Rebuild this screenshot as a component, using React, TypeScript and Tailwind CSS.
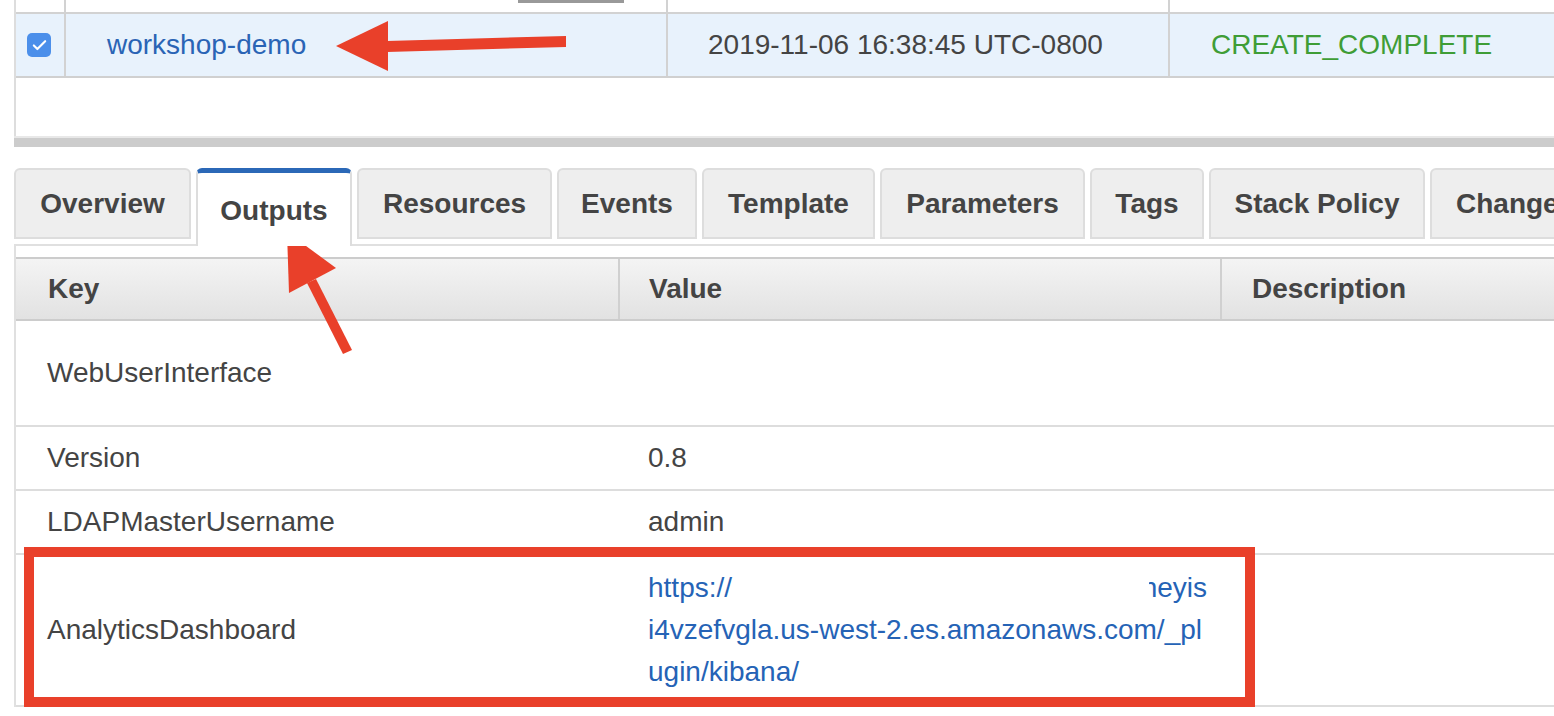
import { Check } from 'lucide-react'

const FONT = { fontFamily: '"Liberation Sans", Arial, Helvetica, sans-serif' }

// Tab widths measured off the console strip
const TABS = [
  { label: 'Overview', w: 'w-[177px]' },
  { label: 'Outputs', w: 'w-[156px]', active: true },
  { label: 'Resources', w: 'w-[195px]' },
  { label: 'Events', w: 'w-[140px]' },
  { label: 'Template', w: 'w-[173px]' },
  { label: 'Parameters', w: 'w-[205px]' },
  { label: 'Tags', w: 'w-[114px]' },
  { label: 'Stack Policy', w: 'w-[216px]' },
]

const OUTPUTS = [
  { key: 'WebUserInterface', value: '', h: 'h-[106px]' },
  { key: 'Version', value: '0.8', h: 'h-[64px]' },
  { key: 'LDAPMasterUsername', value: 'admin', h: 'h-[64px]' },
]

function StackRow() {
  return (
    <div className="ml-[14px] border-l-2 border-[#dddddd]">
      <div className="flex h-[14px] border-b-2 border-[#d2d2d2]">
        <div className="w-[50px] border-r-2 border-[#d2d2d2]" />
        <div className="w-[602px] border-r-2 border-[#d2d2d2]">
          <div className="ml-[452px] w-[106px] h-[3px] bg-[#999999]" />
        </div>
        <div className="w-[502px] border-r-2 border-[#d2d2d2]" />
        <div className="flex-1" />
      </div>
      <div className="flex h-[64px] bg-[#e8f2fc] border-b-2 border-[#d0d0d0] text-[28px]">
        <div className="w-[50px] border-r-2 border-[#d2d2d2] flex items-center justify-center pr-[2px]">
          <div className="w-[24px] h-[24px] rounded-[5px] bg-[#4b8fea] flex items-center justify-center">
            <Check className="w-[17px] h-[17px] text-white" strokeWidth={3} />
          </div>
        </div>
        <div className="w-[602px] border-r-2 border-[#d2d2d2] flex items-center pl-[41px] text-[#2a64b5]">
          workshop-demo
        </div>
        <div className="w-[502px] border-r-2 border-[#d2d2d2] flex items-center pl-[40px] text-[#444444]">
          2019-11-06 16:38:45 UTC-0800
        </div>
        <div className="flex-1 flex items-center pl-[41px] text-[#3f9d36]">CREATE_COMPLETE</div>
      </div>
      <div className="h-[58px]" />
    </div>
  )
}

function Tabs() {
  return (
    <div className="mt-[21px] ml-[14px] h-[76px] flex items-start gap-[5px] whitespace-nowrap">
      {TABS.map(t =>
        t.active ? (
          <div
            key={t.label}
            className={`${t.w} relative z-10 h-[78px] shrink-0 bg-white border-x-2 border-[#dddddd] border-t-[5px] border-t-[#2b68b7] rounded-t-[6px] flex items-center justify-center pt-[2px] text-[28px] font-bold text-[#444444]`}
          >
            {t.label}
          </div>
        ) : (
          <div
            key={t.label}
            className={`${t.w} h-[71px] shrink-0 bg-[#eeeeee] border-2 border-[#dddddd] rounded-t-[6px] flex items-center justify-center text-[28px] font-bold text-[#444444]`}
          >
            {t.label}
          </div>
        )
      )}
      <div className="w-[220px] h-[71px] shrink-0 bg-[#eeeeee] border-2 border-[#dddddd] rounded-t-[6px] flex items-center pl-[24px] text-[28px] font-bold text-[#444444]">
        Change Sets
      </div>
    </div>
  )
}

function OutputsTable() {
  return (
    <div className="ml-[14px] border-l-2 border-t-2 border-[#e0e0e0] pt-[11px] text-[28px] text-[#444444]">
      <div className="flex h-[64px] border-y-2 border-[#cccccc] bg-gradient-to-b from-[#f4f4f4] to-[#e2e2e2] font-bold">
        <div className="w-[604px] border-r-2 border-[#d0d0d0] flex items-center pl-[32px]">Key</div>
        <div className="w-[602px] border-r-2 border-[#d0d0d0] flex items-center pl-[29px]">Value</div>
        <div className="flex-1 flex items-center pl-[30px]">Description</div>
      </div>
      {OUTPUTS.map(r => (
        <div key={r.key} className={`flex ${r.h} border-b-2 border-[#dddddd]`}>
          <div className="w-[604px] flex items-center pl-[31px]">{r.key}</div>
          <div className="w-[602px] flex items-center pl-[28px]">{r.value}</div>
        </div>
      ))}
      <div className="flex h-[152px] border-b-2 border-[#dddddd]">
        <div className="w-[604px] flex items-center pl-[31px]">AnalyticsDashboard</div>
        <div className="w-[602px] flex items-center pl-[28px]">
          <div className="w-[562px] leading-[42px] text-[#2563b6]">
            <div className="flex justify-between">
              <span>https://</span>
              <span className="inline-block overflow-hidden">
                <span className="inline-block -ml-[7px] mr-[3px]">neyis</span>
              </span>
            </div>
            <div>i4vzefvgla.us-west-2.es.amazonaws.com/_pl</div>
            <div>ugin/kibana/</div>
          </div>
        </div>
      </div>
    </div>
  )
}

export default function App() {
  return (
    <div className="relative w-[1554px] h-[716px] overflow-hidden bg-white" style={FONT}>
      <StackRow />
      <div className="ml-[14px] h-[11px] bg-[#cccccc] border-t-2 border-[#e8e8e8]" />
      <Tabs />
      <OutputsTable />

      {/* annotations drawn over the screenshot */}
      <div className="absolute left-[24px] top-[547px] w-[1231px] h-[160px] border-[10px] border-[#e9402a] pointer-events-none" />
      <svg className="absolute inset-0 pointer-events-none" width="1554" height="716" viewBox="0 0 1554 716">
        <polygon points="566,36 566,47 387,52 387,41" fill="#e9402a" />
        <polygon points="336,46 388,21 388,71" fill="#e9402a" />
        <polygon points="316,279 307,283 343,354 352,350" fill="#e9402a" />
        <polygon points="287,232 336,268 289,293" fill="#e9402a" />
      </svg>
    </div>
  )
}
